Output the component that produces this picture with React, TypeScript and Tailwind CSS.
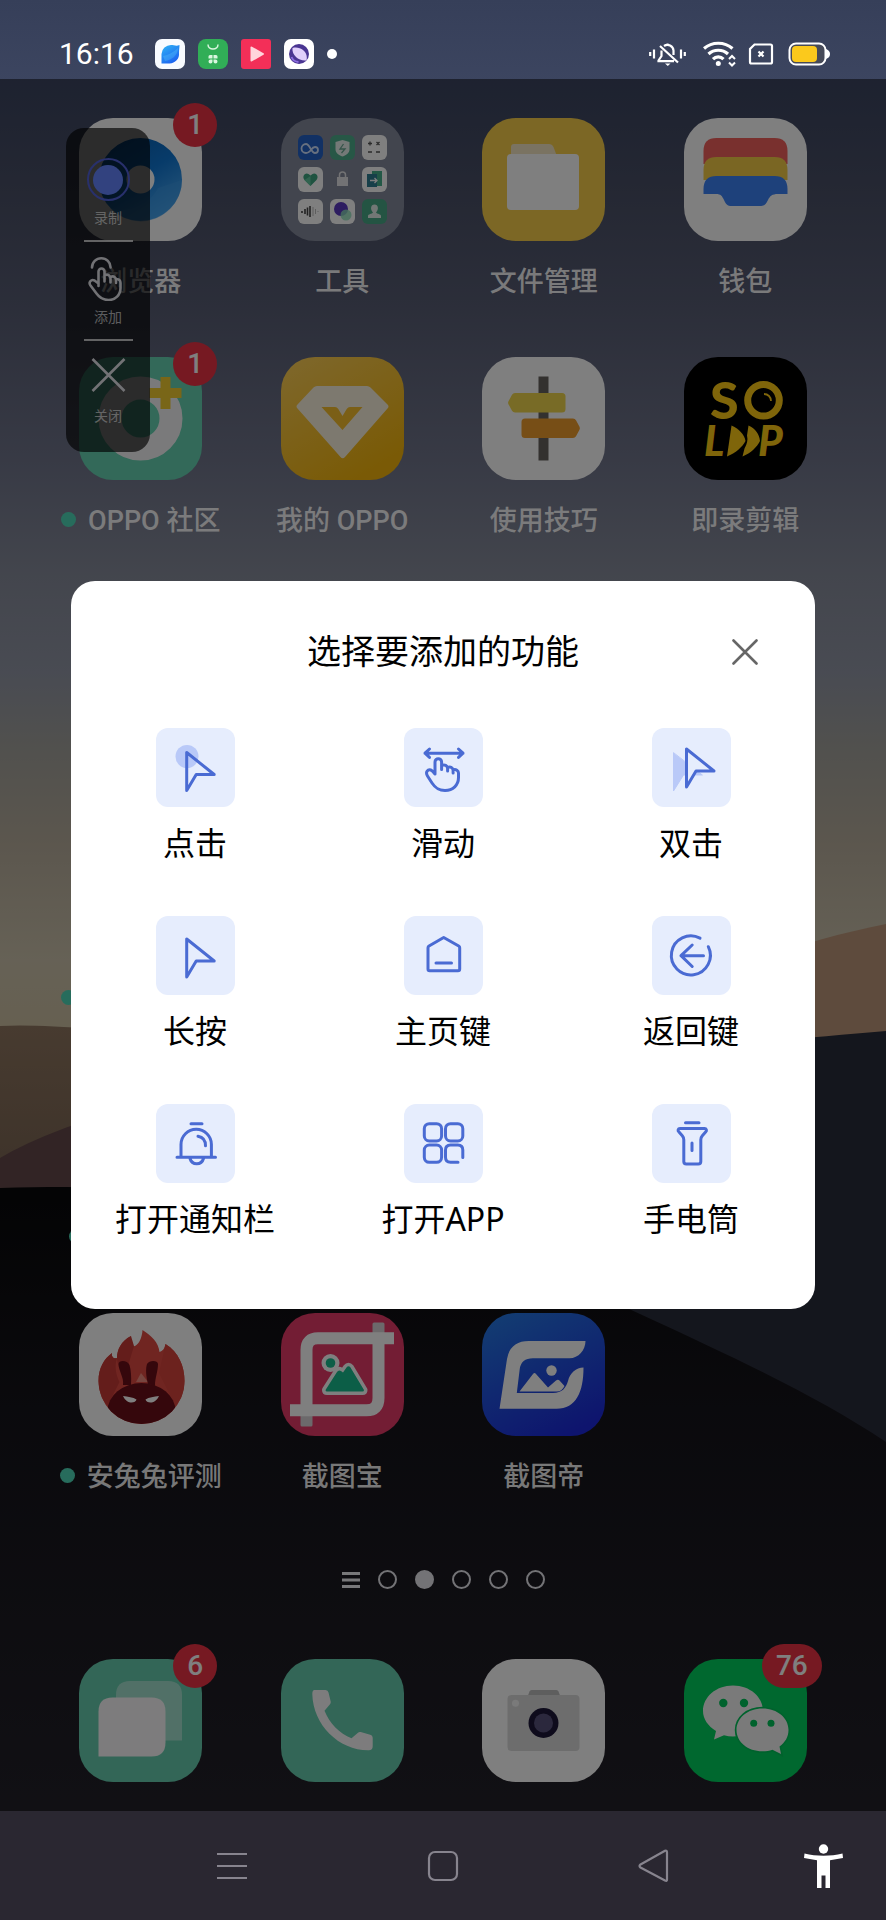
import React, { useState } from 'react';

interface AppInfo {
  name: string;
  icon?: React.ReactNode;
  badge?: number;
  updated?: boolean;
  labelWidth?: string;
}

const BLUE = '#4a6bd3';

const Tile = ({ children }: { children: React.ReactNode }) => (
  <svg viewBox="0 0 123 123" className="block size-full" aria-hidden="true">{children}</svg>
);

/* ---------- Launcher icons ---------- */

const BrowserIcon = () => (
  <Tile>
    <defs>
      <linearGradient id="browser" x1="0" y1="0" x2="0.6" y2="1">
        <stop offset="0" stopColor="#0a5cab" />
        <stop offset="0.55" stopColor="#0f77d4" />
        <stop offset="1" stopColor="#4aa8f2" />
      </linearGradient>
    </defs>
    <rect width="123" height="123" fill="#fff" />
    <circle cx="61.5" cy="61.5" r="41.5" fill="url(#browser)" />
    <path d="M103 61.5a41.5 41.5 0 0 1-72 28.500c20 6 40-4 48-20 8-3 16-5 24-8.500z" fill="#3c9bea" opacity="0.5" />
    <circle cx="61.5" cy="61.5" r="14" fill="#fff" />
  </Tile>
);

const ToolsIcon = () => (
  <Tile>
    <rect width="123" height="123" fill="#858b9c" />
    <rect x="17" y="17" width="25" height="25" rx="6" fill="#2563c8" />
    <path d="M31 31c-2.500 3-4 4-6 4a4.500 4.500 0 0 1 0-9c4 0 5 9 9 9a3 3 0 0 0 0-6c-2 0-3 1.500-4 3" fill="none" stroke="#cfe0ff" strokeWidth="1.800" />
    <rect x="49" y="17" width="25" height="25" rx="6" fill="#4fae8d" />
    <path d="M61.500 22l7 2v7c0 4-3 6-7 7.500c-4-1.500-7-3.500-7-7.500v-7z" fill="#e9f2ee" />
    <path d="M62.500 26l-3.500 5h5l-3.500 4" fill="none" stroke="#6aa893" strokeWidth="1.300" />
    <rect x="81" y="17" width="25" height="25" rx="6" fill="#fff" />
    <path d="M87 25.500h4M89 23.500v4M95.500 24l3 3M98.500 24l-3 3M87 34h4M95 34h4" stroke="#555" strokeWidth="1.300" />
    <rect x="17" y="49" width="25" height="25" rx="6" fill="#fff" />
    <path d="M29.500 68l-6-6c-3-4 1-8 4-6l2 1.500l2-1.500c3-2 7 2 4 6z" fill="#3fa681" />
    <path d="M29.500 68l-6-6l6-4z" fill="#62c79f" />
    <rect x="56" y="59" width="11" height="9" fill="#e5e5e8" />
    <path d="M58.500 59v-2a3 3 0 0 1 6 0v2" fill="none" stroke="#e5e5e8" strokeWidth="1.500" />
    <rect x="81" y="49" width="25" height="25" rx="6" fill="#fff" />
    <path d="M91 53h10v15h-10z" fill="#47b08c" />
    <path d="M86 56h10v13h-10z" fill="#2f7f93" />
    <path d="M89 62.500h7m-2.500-2.500l2.500 2.500l-2.500 2.500" fill="none" stroke="#fff" strokeWidth="1.300" />
    <rect x="17" y="81" width="25" height="25" rx="6" fill="#fff" />
    <path d="M21 93v2M24 91v5M26.500 89.500v8M29 88v11" stroke="#444" strokeWidth="1.600" />
    <path d="M32 89v9M34.500 91v5M37 93v1" stroke="#bbb" strokeWidth="1" />
    <rect x="49" y="81" width="25" height="25" rx="6" fill="#fff" />
    <circle cx="60" cy="91" r="7" fill="#5a39c0" />
    <circle cx="65" cy="97" r="5.500" fill="#8be0b8" opacity="0.8" />
    <rect x="81" y="81" width="25" height="25" rx="6" fill="#48a886" />
    <path d="M87 100v-2c0-2 4-2 5-3.500c-3-3-2.500-8 1.500-8s4.500 5 1.500 8c1 1.500 5 1.500 5 3.500v2z" fill="#e5eeea" />
  </Tile>
);

const FilesIcon = () => (
  <Tile>
    <rect width="123" height="123" fill="#f8cf4b" />
    <path d="M29 40V29q0-3 3-3h35q3 0 4.500 3l3 8v6z" fill="#f4e6c4" />
    <rect x="25" y="36" width="72" height="56" rx="4" fill="#fff" />
  </Tile>
);

const WalletIcon = () => (
  <Tile>
    <rect width="123" height="123" fill="#fff" />
    <path d="M19.500 46V33q0-13 13-13h58q13 0 13 13v13z" fill="#f2605c" />
    <path d="M19.500 62V52q0-13 13-13h58q13 0 13 13v10z" fill="#f5cd47" />
    <path d="M19.500 76v-5q0-13 13-13h58q13 0 13 13v5H94c-6 0-8 2-10 6c-2 4-3 6-8 6H48c-5 0-6-2-8-6c-2-4-3-6-8-6z" fill="#3c82f6" />
  </Tile>
);

const CommunityIcon = () => (
  <Tile>
    <rect width="123" height="123" fill="#66d2b2" />
    <circle cx="61.500" cy="61.500" r="30.500" fill="none" stroke="#f5f5f7" strokeWidth="23" />
    <path d="M81.500 20h10v11h11v10h-11v11h-10V41h-11V31h11z" fill="#f3cc30" />
  </Tile>
);

const MemberIcon = () => (
  <Tile>
    <defs>
      <linearGradient id="member" x1="0" y1="0" x2="0.6" y2="1">
        <stop offset="0" stopColor="#fdd05a" />
        <stop offset="1" stopColor="#f4b50c" />
      </linearGradient>
    </defs>
    <rect width="123" height="123" fill="url(#member)" />
    <path d="M36 29h50q2 0 3.500 1.500l17 17q2 2 0 4L64 100q-2.300 2.500-4.500 0L16.500 51.500q-2-2 0-4l16-17q1.500-1.500 3.500-1.500z" fill="#fbf3df" />
    <path d="M40.500 50H54q2 0 3.300 2l4.200 7l4.200-7Q67 50 69 50h12.500L61.500 73z" fill="#f6bf2d" />
  </Tile>
);

const TipsIcon = () => (
  <Tile>
    <rect width="123" height="123" fill="#fff" />
    <rect x="56.500" y="19.500" width="10" height="84" fill="#66625f" />
    <path d="M33 36h47q3.500 0 3.500 3.500v12.500q0 3.500-3.500 3.500H33q-2 0-3-1.800l-3.500-6.500q-.8-1.500 0-3l3.500-6.500q1-1.700 3-1.700z" fill="#f0d64c" />
    <path d="M91 61.500H43q-3.500 0-3.500 3.500v12.500q0 3.500 3.500 3.500h48q2 0 3-1.700l3.500-6.500q.8-1.500 0-3l-3.500-6.500q-1-1.800-3-1.800z" fill="#ee9d2c" />
  </Tile>
);

const SoloopIcon = () => (
  <Tile>
    <rect width="123" height="123" fill="#000" />
    <g fill="#fecb14" fontFamily="Lato, Roboto, sans-serif" fontWeight="900">
      <text x="26" y="62" fontSize="52">S</text>
      <text x="20" y="99" fontSize="42" fontStyle="italic">L</text>
      <text x="74" y="99" fontSize="42" fontStyle="italic">P</text>
      <path d="M47.500 68.500c7 3 13 9 14 15.500c-3 6-10 12-18.500 15.500z" />
      <path d="M64.500 68.500c7 3 11 9 11.500 15.500c-3 6-9 12-17.500 15.500l2-8q4-7 2.500-13z" />
    </g>
    <circle cx="79.500" cy="43.300" r="15.800" fill="none" stroke="#fecb14" strokeWidth="7" />
    <path d="M80 37c4 0 7 3 7 7" fill="none" stroke="#fecb14" strokeWidth="1.800" />
  </Tile>
);

const AntutuIcon = () => (
  <Tile>
    <defs>
      <clipPath id="flame"><circle cx="62.500" cy="68" r="43" /></clipPath>
    </defs>
    <rect width="123" height="123" fill="#fff" />
    <path d="M62.500 111A43 43 0 0 1 19.500 68C19.500 55 25 46 33 40c-1 4 2 6 5 5C38 37 42 28 52 23c-2 7 1 11 4 10c4-2 7-8 7.500-16c9 6 16 12 17 22c3-1 5-3 6-8c13 8 19 22 19 37a43 43 0 0 1-43 43z" fill="#e04b43" />
    <path d="M33 40C25 46 19.500 55 19.500 68c0 9 3 18 9 25l12-24c-4-8-5-16-2.500-24c-3 1-6-1-5-5zM52 23C42 28 38 37 38 45c0 6 4 14 8 18l9-30z" fill="#c93a36" />
    <path d="M86.500 31c13 8 19 22 19 37c0 10-3 18-9 25L80 60z" fill="#d8443d" />
    <path d="M62 60l-5 9h12z" fill="#ef8a7e" />
    <g clipPath="url(#flame)">
      <ellipse cx="62.500" cy="98" rx="34" ry="28" fill="#6b0e18" />
    </g>
    <path d="M39.500 51c0-4 9-4 11 1c1.500 5 2 12 1.500 20h-8c1-8-4.500-14-4.500-21zM79 51c0-4-9-4-11 0c-1.500 5-1 12 1 20l7 2c0-9 3-14 3-22z" fill="#6b0e18" />
    <path d="M44 83c5 1 10 1 13.500 3.500c-1 4-10 5-13.500-3.500zM80 83c-5 1-10 1-13.500 3.500c1 4 10 5 13.500-3.500z" fill="#fff" />
  </Tile>
);

const CropIcon = () => (
  <Tile>
    <rect width="123" height="123" fill="#e63a68" />
    <path d="M91.500 11q0-1.500 1.500-1.500h9q1.500 0 1.500 1.500v10h-12zM19.500 102h12v10q0 1.500-1.500 1.500h-9q-1.500 0-1.500-1.500z" fill="#d9d3d6" />
    <path d="M113 25.300H37q-11.500 0-11.500 11.500V98M97.500 24v61q0 12.300-12 12.300H9" fill="none" stroke="#fff" strokeWidth="12" />
    <path d="M44.500 77L56 59q1.500-2.500 4-1l2 1.500l3.500-5q2-2.500 4 0L83 77q0 1.500-1.500 1.500H46q-1.500 0-1.500-1.500z" fill="#fff" stroke="#fff" strokeWidth="7" strokeLinejoin="round" />
    <circle cx="49.500" cy="50" r="9" fill="#fff" />
    <circle cx="49.500" cy="50" r="4.800" fill="#19bd8e" />
    <path d="M44.500 77L56 59q1.500-2.500 4-1l2 1.500l3.500-5q2-2.500 4 0L83 77q0 1.500-1.500 1.500H46q-1.500 0-1.500-1.500z" fill="#19bd8e" />
  </Tile>
);

const ShotIcon = () => (
  <Tile>
    <defs>
      <linearGradient id="shot" x1="0.2" y1="0" x2="0.7" y2="1">
        <stop offset="0" stopColor="#2577e4" />
        <stop offset="1" stopColor="#1c28dc" />
      </linearGradient>
    </defs>
    <rect width="123" height="123" fill="url(#shot)" />
    <path d="M17.500 95.700L25 46q3-18 22-18h56.500c0 9-7 17.300-16 17.300H51q-12 0-13.300 11L34.800 80H71c9 0 13-5 15-12c2-8 8-13.500 15.500-13.500c0 24-7 41.200-27 41.200z" fill="#fff" />
    <path d="M37.500 78.500l13.500-17.500q1.500-2 3 0L66 74.500l8-7q2-1.500 3.500 0l5 5.500q-2.500 5.500-8 5.500z" fill="#fff" />
    <circle cx="69.500" cy="57.500" r="5.200" fill="#fff" />
  </Tile>
);

const MessagesIcon = () => (
  <Tile>
    <rect width="123" height="123" fill="#66cdae" />
    <path d="M103 81.500H37V36q0-14 14-14h38q14 0 14 14z" fill="#fff" opacity="0.4" />
    <path d="M19.500 97.500V52.500q0-14 14-14h39q14 0 14 14v31q0 14-14 14z" fill="#fbf9fb" />
  </Tile>
);

const PhoneIcon = () => (
  <Tile>
    <rect width="123" height="123" fill="#66cdae" />
    <path d="M33.500 31h11q2.500 0 3 2.500l2.200 9q.3 1.500-.7 2.700l-5.500 6.500c5 12.500 15 23 27 27.500l6.500-5.500q1.200-1 2.700-.6l9.500 2.700q2.500.7 2.500 3v8.500q0 4-4 4C58 91.500 32 66 31.300 35q0-4 2.200-4z" fill="#fbf9fb" />
  </Tile>
);

const CameraIcon = () => (
  <Tile>
    <rect width="123" height="123" fill="#fff" />
    <path d="M46 36.500l1.500-4q.6-1.500 2-1.500h25q1.400 0 2 1.500l1.500 4z" fill="#bdbdbd" />
    <rect x="25.500" y="36" width="72" height="56" rx="4" fill="#dadada" />
    <circle cx="33.500" cy="44.300" r="3.500" fill="#f5f5f5" />
    <circle cx="61.500" cy="64" r="15" fill="#1c1738" />
    <circle cx="61.500" cy="64" r="9.500" fill="#57507a" />
  </Tile>
);

const WechatIcon = () => (
  <Tile>
    <rect width="123" height="123" fill="#00d15e" />
    <path d="M49 26.500c17 0 30 11.500 30 25.500s-13 25.500-30 25.500c-3 0-6-.4-9-1.200l-10 4.200l2-8.500C24 67 19 60 19 52c0-14 13-25.500 30-25.500z" fill="#f5f5f5" />
    <circle cx="39.300" cy="44" r="4.200" fill="#00c45a" />
    <circle cx="60" cy="44" r="4.200" fill="#00c45a" />
    <path d="M78.500 49.500c15 0 26 9.600 26 21.500c0 7-3.500 12.500-9 16.500l1.500 7.500l-8.500-4.200c-3 1-6.500 1.500-10 1.500c-15 0-26-9.500-26-21.300s11-21.500 26-21.500z" fill="#f5f5f5" stroke="#00c45a" strokeWidth="3.500" paintOrder="stroke" />
    <circle cx="69.700" cy="64.300" r="3.500" fill="#00c45a" />
    <circle cx="87" cy="64.300" r="3.500" fill="#00c45a" />
  </Tile>
);

/* ---------- Dialog icons ---------- */

const Line = ({ children }: { children: React.ReactNode }) => (
  <svg viewBox="0 0 79 79" className="block size-full" fill="none" stroke={BLUE} strokeWidth="3" strokeLinecap="round" strokeLinejoin="round" aria-hidden="true">
    {children}
  </svg>
);

const HAND = 'M31 46V34a3.300 3.300 0 0 1 6.600 0v7.500M37.600 37.500c3-1.500 6 0 6 3V43M43.600 39.500c3-1.200 5.500.3 5.500 3V45M49.100 41.800c3-.8 5.400.7 5.400 3.200v4.500c0 7.500-5.500 13-13.500 13c-7 0-10-3-13-7.500l-4.500-7c-2.500-4 .5-7 3.300-6c1.700.6 2.700 2 4.200 4';

const ACTIONS: { name: string; icon: React.ReactNode }[] = [
  {
    name: '点击',
    icon: <Line><circle cx="31" cy="28.500" r="11.500" fill="#b9c9f8" stroke="none" /><path d="M30.700 24.500v38l9.500-16h18z" /></Line>,
  },
  {
    name: '滑动',
    icon: <Line><path d="M21 25.200h38M25.500 21l-4.500 4.200l4.500 4.200M54.500 21l4.500 4.200l-4.500 4.200" /><path d={HAND} /></Line>,
  },
  {
    name: '双击',
    icon: <Line><path d="M21.500 25v38l10-16H50z" fill="#b9c9f8" stroke="#b9c9f8" strokeWidth="1" /><path d="M34.500 21v38l9.500-16h18z" fill="#e6edfd" /></Line>,
  },
  { name: '长按', icon: <Line><path d="M30.700 23v38l9.500-16h18z" /></Line> },
  {
    name: '主页键',
    icon: <Line><path d="M39.700 21.500l15 8.500q1 .6 1 1.700V53q0 1.700-1.700 1.700H25.700Q24 54.700 24 53V31.700q0-1.100 1-1.700zM32 47h15.500" /></Line>,
  },
  {
    name: '返回键',
    icon: <Line><path d="M48 22.200a19.500 19.500 0 1 0 8.300 8.500M51.500 39.700H29M40.200 29L29 39.700L40.200 50.500" /></Line>,
  },
  {
    name: '打开通知栏',
    icon: <Line><path d="M35 19.700h11M25 53V40.500a15.200 15.200 0 0 1 30.400 0V53M21 53.300h38.500M34 54.500c2 7 11.500 7 13.500 0M42 32.200c4.500.8 7.500 4 7.500 9.500" /></Line>,
  },
  {
    name: '打开APP',
    icon: (
      <Line>
        <rect x="20.300" y="19.700" width="17.300" height="17.300" rx="5" />
        <rect x="41.500" y="19.700" width="17.300" height="17.300" rx="5" />
        <rect x="20.300" y="41" width="17.300" height="17.300" rx="5" />
        <path d="M58.800 53.500V46q0-5-5-5h-7.300q-5 0-5 5v7.300q0 5 5 5H54" />
      </Line>
    ),
  },
  {
    name: '手电筒',
    icon: <Line><path d="M33.500 18.700h13.500M28 24.500h24.500c2 0 2.500 2 1.300 3.300l-3.500 4q-1.500 1.700-1.500 4V57.500q0 2.500-2.500 2.500h-12q-2.500 0-2.500-2.500V35.800q0-2.300-1.500-4l-3.500-4C25.500 26.500 26 24.500 28 24.500zM40 39v7.500" /></Line>,
  },
];

/* ---------- Data ---------- */

const empty = (): AppInfo => ({ name: '' });

const APPS: AppInfo[] = [
  { name: '浏览器', icon: <BrowserIcon />, badge: 1 },
  { name: '工具', icon: <ToolsIcon /> },
  { name: '文件管理', icon: <FilesIcon /> },
  { name: '钱包', icon: <WalletIcon /> },
  { name: 'OPPO 社区', icon: <CommunityIcon />, badge: 1, updated: true },
  { name: '我的 OPPO', icon: <MemberIcon /> },
  { name: '使用技巧', icon: <TipsIcon /> },
  { name: '即录剪辑', icon: <SoloopIcon /> },
  empty(), empty(), empty(), empty(),
  { name: '', updated: true, labelWidth: 'w-[132px]' }, empty(), empty(), empty(),
  { name: '', updated: true, labelWidth: 'w-[116px]' }, empty(), empty(), empty(),
  { name: '安兔兔评测', icon: <AntutuIcon />, updated: true },
  { name: '截图宝', icon: <CropIcon /> },
  { name: '截图帝', icon: <ShotIcon /> },
];

const DOCK: AppInfo[] = [
  { name: '信息', icon: <MessagesIcon />, badge: 6 },
  { name: '电话', icon: <PhoneIcon /> },
  { name: '相机', icon: <CameraIcon /> },
  { name: '微信', icon: <WechatIcon />, badge: 76 },
];

/* ---------- Pieces ---------- */

const Wallpaper = () => (
  <div className="absolute inset-0 bg-[linear-gradient(#363f59_0%,#3d4661_5%,#4a5067_10%,#585d74_16%,#70758b_24%,#878c9b_30%,#9297a6_35%,#a3a29c_39%,#b8ae9d_44%,#ccc3ac_50%,#cdbf9e_55%)]">
    <svg viewBox="0 0 886 1920" preserveAspectRatio="none" className="size-full" aria-hidden="true">
      <defs>
        <linearGradient id="ground" x1="0" y1="0" x2="0" y2="1">
          <stop offset="0" stopColor="#08080a" />
          <stop offset="0.3" stopColor="#15141a" />
          <stop offset="1" stopColor="#26242d" />
        </linearGradient>
        <linearGradient id="sand" x1="0" y1="0" x2="0" y2="1">
          <stop offset="0" stopColor="#8f7660" />
          <stop offset="1" stopColor="#74604f" />
        </linearGradient>
      </defs>
      <path d="M600 1040C700 980 780 945 886 924V1200H600z" fill="#bd977a" />
      <path d="M0 1026q60-3 200 14v200H0z" fill="url(#sand)" />
      <path d="M0 1158q50-30 160-60v200H0z" fill="#64494a" />
      <path d="M500 1090C650 1050 780 1040 886 1031V1500H500z" fill="#292c3b" />
      <path d="M0 1188C240 1180 430 1215 640 1314C740 1360 820 1398 886 1442V1920H0z" fill="url(#ground)" />
    </svg>
  </div>
);

const AppIcon = ({ app }: { app: AppInfo }) => (
  <span className="relative block size-[123px]">
    {app.icon && <span className="block size-full overflow-hidden rounded-[34px]">{app.icon}</span>}
    {app.badge && (
      <span className="absolute -top-[15px] -right-[15px] flex h-11 min-w-11 items-center justify-center rounded-full bg-[#ec3345] px-[14px] text-[28px] font-medium text-white">
        {app.badge}
      </span>
    )}
  </span>
);

const StatusBar = () => (
  <header className="relative flex items-center justify-between pt-[39px] pr-14 pb-[10px] pl-[59px]">
    <div className="flex items-center gap-[13px]">
      <time className="mr-[8px] text-[30px] leading-[30px] text-white">16:16</time>
      <svg viewBox="0 0 30 30" className="size-[30px]" aria-hidden="true">
        <defs>
          <linearGradient id="bird" x1="0" y1="0" x2="0.6" y2="1">
            <stop offset="0" stopColor="#2fb4f5" />
            <stop offset="1" stopColor="#1c63f0" />
          </linearGradient>
        </defs>
        <rect width="30" height="30" rx="7" fill="#f8fbff" />
        <path d="M24.500 6c0 3-.5 4-.5 8a9.500 9.500 0 0 1-9.500 10.500H6.500V15A9.500 9.500 0 0 1 16 6c3 0 5 1.500 8.500 0z" fill="url(#bird)" />
        <path d="M8 17c5-1 11-4 15-8c0 8-7 12-13 13z" fill="#5fd0fb" opacity="0.3" />
      </svg>
      <svg viewBox="0 0 30 30" className="size-[30px]" aria-hidden="true">
        <rect width="30" height="30" rx="8" fill="#31ae57" />
        <path d="M10 5.500c0 6 10 6 10 0" fill="none" stroke="#d9f6df" strokeWidth="1.500" />
        <path d="M10.500 19.500v-2q0-1.500 1.500-1.500h2.500v3.500zM15.500 19.500V16H18q1.500 0 1.500 1.500v2zM12.500 20.500h2v2a2 2 0 1 1-2-2zM15.500 20.500h2a2 2 0 1 1-2 2z" fill="#d9f6df" />
      </svg>
      <svg viewBox="0 0 30 30" className="size-[30px]" aria-hidden="true">
        <rect width="30" height="30" rx="3" fill="#f32f58" />
        <path d="M9.500 8.500q0-1.500 1.500-.8l11.500 6.600q1 .7 0 1.400L11 22.300q-1.500.7-1.500-.8z" fill="#ffd5dc" />
      </svg>
      <svg viewBox="0 0 30 30" className="size-[30px]" aria-hidden="true">
        <rect width="30" height="30" rx="7" fill="#fff" />
        <circle cx="15" cy="15" r="10" fill="#4a3592" />
        <path d="M8.500 9c4-1 8 0 10.500 2c3 2.500 4.500 6 3.500 10.500c-4 .5-8-1-10.500-3.500c-2.500-2.500-4-5.500-3.500-9z" fill="#e0cffa" />
        <path d="M7.500 18a8 8 0 0 0 7 5" fill="none" stroke="#8d6ee0" strokeWidth="1.800" />
      </svg>
      <span className="size-[10px] rounded-full bg-white" />
    </div>

    <div className="flex items-center">
      <svg viewBox="0 0 37 26" className="mr-[17px] h-[26px] w-[37px]" fill="none" stroke="#fff" strokeWidth="2.200" aria-hidden="true">
        <path d="M1.200 11v4M5 8.500v9M32 8.500v9M35.800 11v4" />
        <path d="M15 5a6 6 0 0 1 9.500 4.500V14M12.500 9.500V15L9.500 19.500v.7h15.500M18.500 2.500V4M11 5l18 16.500" />
        <path d="M16 22.500h5.500l-2.700 2.500z" fill="#fff" stroke="none" />
      </svg>
      <svg viewBox="0 0 33 26" className="mr-[12px] h-[26px] w-[33px]" fill="none" stroke="#fff" strokeWidth="3.200" aria-hidden="true">
        <path d="M1 7.500c8-7 20.500-7 28.500 0M5.500 13c5.500-5 14-5 19.500 0M10 18.200c3-3 7.500-3 10.500 0" />
        <circle cx="15.300" cy="22.500" r="2.500" fill="#fff" stroke="none" />
        <path d="M26 18l3-3l3 3M26 21.500l3 3l3-3" strokeWidth="2" />
      </svg>
      <svg viewBox="0 0 26 22" className="mr-[14px] h-[22px] w-[26px]" fill="none" stroke="#fff" strokeWidth="2.200" aria-hidden="true">
        <path d="M6.500 1.500H22.500q1.500 0 1.500 1.500V19q0 1.500-1.500 1.500h-19Q2 20.500 2 19V6z" />
        <path d="M10.500 8.500l5 5M15.500 8.500l-5 5" />
      </svg>
      <svg viewBox="0 0 42 24" className="h-6 w-[42px]" aria-hidden="true">
        <rect x="1.500" y="1.500" width="36" height="21" rx="6.500" fill="#464a58" stroke="#fff" strokeWidth="2" />
        <rect x="4" y="4" width="25" height="16" rx="4" fill="#fbc91c" />
        <path d="M38 7c3 1 4 3 4 5s-1 4-4 5z" fill="#fff" />
      </svg>
    </div>
  </header>
);

const FloatingPanel = () => {
  const item = 'flex flex-col items-center gap-2';
  const box = 'flex size-[45px] items-center justify-center';
  const label = 'text-[14px] leading-4 text-white/70';
  const rule = 'my-[14px] h-[2px] w-[49px] bg-white/75';
  return (
    <aside className="absolute top-[49px] left-[66px] flex w-[84px] flex-col items-center rounded-[18px] bg-black/65 pt-[29px] pb-[28px]">
      <button className={item}>
        <span className={box}>
          <span className="flex size-[43px] items-center justify-center rounded-full border-2 border-[#5060d8]">
            <span className="size-[30px] rounded-full bg-[#6484ff]" />
          </span>
        </span>
        <span className={label}>录制</span>
      </button>
      <div className={rule} />
      <button className={item}>
        <span className={box}>
          <svg viewBox="0 0 45 45" className="size-full" fill="none" stroke="#e4e4ea" strokeWidth="2.600" strokeLinecap="round" strokeLinejoin="round" aria-hidden="true">
            <path d="M6 11.500a9.300 9.300 0 0 1 18.600 0" />
            <path d="M12.500 30V15.500a3 3 0 0 1 6 0v10M18.500 19.500c3-2 6 0 6 3v4M24.500 21c3-1.500 5.500 0 5.500 3v3M30 23.500c3-1 4.500 1 4.500 3.500v5c0 7-5 12-12 12c-6 0-9-2.500-12-6.500l-6-8c-2.500-3.500 1-6.500 4-5l4 3" />
          </svg>
        </span>
        <span className={label}>添加</span>
      </button>
      <div className={rule} />
      <button className={item}>
        <span className={box}>
          <svg viewBox="0 0 45 45" className="size-full" stroke="#e4e4ea" strokeWidth="2.600" aria-hidden="true">
            <path d="M6.500 4l32 32M38.500 4l-32 32" />
          </svg>
        </span>
        <span className={label}>关闭</span>
      </button>
    </aside>
  );
};

const ActionDialog = ({ onClose }: { onClose: () => void }) => (
  <div className="absolute inset-0 flex items-center justify-center bg-black/50 px-[71px]">
    <section role="dialog" aria-modal="true" aria-labelledby="dialog-title" className="w-full rounded-3xl bg-white pt-[45px] pb-[66px] text-black">
      <div className="mb-[50px] grid grid-cols-[1fr_auto_1fr] items-center pr-[57px]">
        <h1 id="dialog-title" className="col-start-2 pl-[57px] text-[34px] leading-[52px]">选择要添加的功能</h1>
        <button onClick={onClose} aria-label="关闭" className="justify-self-end">
          <svg viewBox="0 0 26 26" className="size-[26px]" stroke="#666" strokeWidth="2.600" strokeLinecap="round" aria-hidden="true">
            <path d="M1.500 1.500l23 23M24.500 1.500l-23 23" />
          </svg>
        </button>
      </div>
      <div className="grid grid-cols-3 gap-y-[49px]">
        {ACTIONS.map(action => (
          <button key={action.name} className="flex flex-col items-center gap-3">
            <span className="size-[79px] rounded-xl bg-[#e6edfd]">{action.icon}</span>
            <span className="font-['Noto_Sans','Noto_Sans_CJK_SC',sans-serif] text-[32px] leading-[48px]">{action.name}</span>
          </button>
        ))}
      </div>
    </section>
  </div>
);

const NavBar = () => (
  <nav className="relative flex h-[109px] items-center bg-[#2a2731]">
    <div className="w-[126px]" />
    <div className="grid flex-1 grid-cols-3 justify-items-center">
      <button aria-label="最近任务">
        <svg viewBox="0 0 34 34" className="size-[34px]" stroke="#87848e" strokeWidth="2.200" aria-hidden="true">
          <path d="M2 5h30M2 17h30M2 29h30" />
        </svg>
      </button>
      <button aria-label="主页">
        <svg viewBox="0 0 34 34" className="size-[34px]" fill="none" stroke="#87848e" strokeWidth="2.200" aria-hidden="true">
          <rect x="3" y="3" width="28" height="28" rx="6" />
        </svg>
      </button>
      <button aria-label="返回">
        <svg viewBox="0 0 34 34" className="size-[34px]" fill="none" stroke="#87848e" strokeWidth="2.200" strokeLinejoin="round" aria-hidden="true">
          <path d="M30 3.500v27q0 2-2 1L3.500 18.500q-2-1.500 0-3L28 1.700q2-.8 2 1.800z" />
        </svg>
      </button>
    </div>
    <button aria-label="无障碍" className="flex w-[126px] justify-center">
      <svg viewBox="0 0 39 44" className="h-11 w-[39px]" fill="#fff" aria-hidden="true">
        <circle cx="19.500" cy="5" r="4.700" />
        <path d="M.5 9.500c12 3 26 3 38 0l.5 4.500l-13 2.200V44h-4.500V31.500h-4V44H13V16.200L0 14z" />
      </svg>
    </button>
  </nav>
);

export default function App() {
  const [open, setOpen] = useState(true);
  const [page] = useState(1);

  return (
    <div className="relative flex min-h-screen flex-col overflow-hidden bg-black font-[Roboto,'Noto_Sans_CJK_SC',sans-serif]">
      <Wallpaper />
      <StatusBar />

      <main className="relative flex-1 pt-[39px] pb-[29px]">
        <div className="grid grid-cols-4 gap-y-[57px] px-10">
          {APPS.map((app, i) => (
            <div key={i} className="flex h-[182px] flex-col items-center gap-[23px]">
              <AppIcon app={app} />
              <div className="flex h-9 items-center gap-3 text-[27px] font-medium whitespace-nowrap text-white/95">
                {app.updated && <span className="mb-1 size-[15px] rounded-full bg-[#4fd9b8]" />}
                {app.name ? <span>{app.name}</span> : <span className={app.labelWidth} />}
              </div>
            </div>
          ))}
        </div>

        {/* Page indicator */}
        <div className="mt-[75px] flex items-center justify-center gap-[18px]">
          <svg viewBox="0 0 18 19" className="h-[19px] w-[18px]" stroke="#f0f0f4" strokeWidth="3" aria-hidden="true">
            <path d="M0 3.500h18M0 10h18M0 16.500h18" />
          </svg>
          {[0, 1, 2, 3, 4].map(n => (
            <span key={n} className={`size-[19px] rounded-full border-2 border-[#e6e6ec] ${n === page ? 'bg-[#e6e6ec]' : ''}`} />
          ))}
        </div>

        {/* Dock */}
        <div className="mt-[70px] grid grid-cols-4 justify-items-center px-10">
          {DOCK.map(app => (
            <button key={app.name} aria-label={app.name}>
              <AppIcon app={app} />
            </button>
          ))}
        </div>

        <FloatingPanel />
        {open && <ActionDialog onClose={() => setOpen(false)} />}
      </main>

      <NavBar />
    </div>
  );
}
